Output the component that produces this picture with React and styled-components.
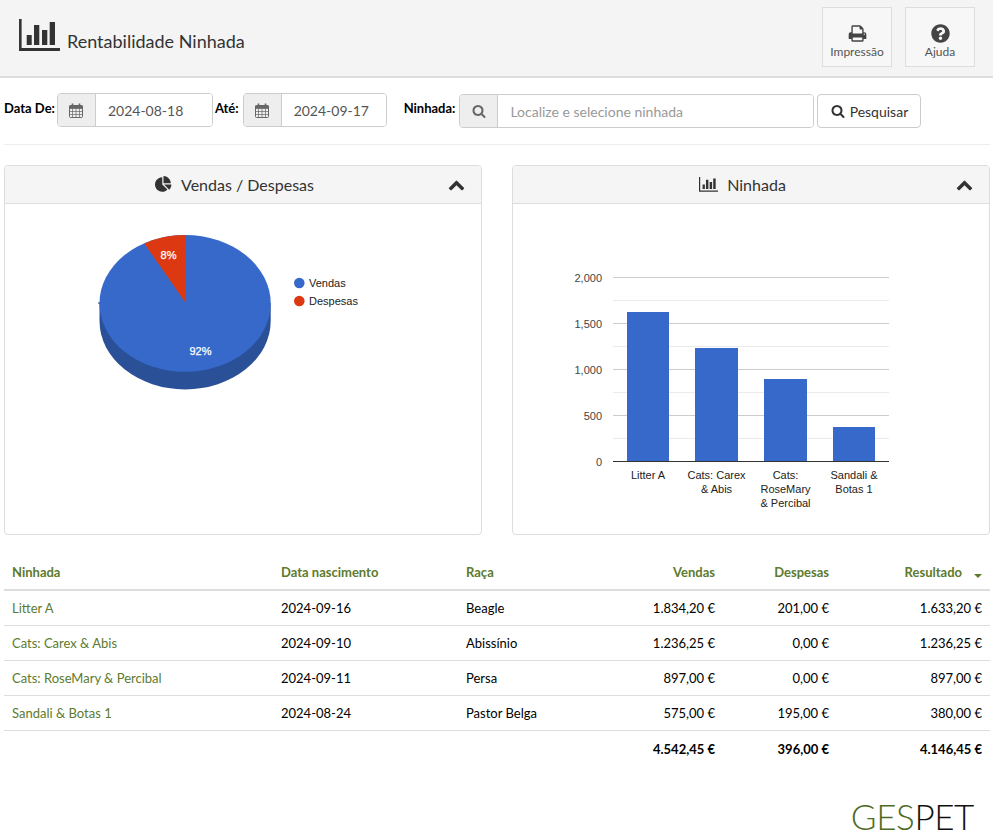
import React from 'react';
import styled, {createGlobalStyle} from 'styled-components';
import {FaQuestionCircle} from 'react-icons/fa';

const GlobalStyle = createGlobalStyle`
  html, body {
    margin: 0;
    padding: 0;
    background: #fff;
  }
  body {
    font-family: Lato, "Liberation Sans", sans-serif;
    font-size: 14px;
    color: #000;
  }
`;

const Page = styled.div`
  width: 993px;
  height: 840px;
  overflow: hidden;
`;

const Header = styled.header`
  height: 78px;
  box-sizing: border-box;
  background: #f4f4f4;
  border-bottom: 2px solid #ddd;
  display: flex;
  align-items: flex-start;
  justify-content: space-between;
  padding: 7px 18px 0 19px;
`;

const TitleWrap = styled.div`
  display: flex;
  align-items: flex-end;
  gap: 7px;
  padding-top: 12px;
  color: #333;
`;

const Title = styled.h1`
  margin: 0;
  font-size: 18px;
  font-weight: 400;
  line-height: 22px;
  color: #333;
  position: relative;
  top: 1px;
`;

const HeaderActions = styled.div`
  display: flex;
  gap: 13px;
`;

const HeaderBtn = styled.button`
  width: 70px;
  height: 60px;
  box-sizing: border-box;
  background: #f7f7f7;
  border: 1px solid #ddd;
  display: flex;
  flex-direction: column;
  align-items: center;
  padding: 16px 0 0;
  font-family: inherit;
  font-size: 12px;
  line-height: 14px;
  color: #555;
  svg {
    width: 19px;
    height: 19px;
    color: #444;
    margin-bottom: 2px;
  }
`;

const FilterRow = styled.form`
  display: flex;
  align-items: flex-start;
  margin: 15px 3px 0 4px;
  padding-bottom: 16px;
  height: 35px;
  border-bottom: 1px solid #eee;
`;

const Label = styled.label`
  font-weight: 700;
  font-size: 13px;
  line-height: 16px;
  margin-top: 1px;
  margin-left: ${({$left}) => $left || 0}px;
  margin-right: ${({$right}) => $right || 3}px;
  padding-top: 7px;
  position: relative;
  top: -1px;
  white-space: nowrap;
`;

const InputGroup = styled.div`
  display: flex;
  height: 34px;
  width: ${({$width}) => $width}px;
  box-sizing: border-box;
  margin-top: ${({$top}) => $top || 0}px;
  border: 1px solid #ccc;
  border-radius: 4px;
  overflow: hidden;
`;

const Addon = styled.span`
  width: 38px;
  flex: none;
  box-sizing: border-box;
  background: #eee;
  border-right: 1px solid #ccc;
  display: flex;
  align-items: center;
  justify-content: center;
  color: #666;
  font-size: 14px;
`;

const Field = styled.input`
  flex: 1;
  min-width: 0;
  border: 0;
  outline: 0;
  padding: 0 12px;
  font-family: inherit;
  font-size: 14px;
  color: #555;
  &::placeholder {
    color: #999;
    opacity: 1;
  }
`;

const SearchBtn = styled.button`
  margin: 1px 0 0 3px;
  width: 104px;
  height: 34px;
  box-sizing: border-box;
  background: #fff;
  border: 1px solid #ccc;
  border-radius: 4px;
  font-family: inherit;
  font-size: 14px;
  color: #333;
  display: flex;
  align-items: center;
  justify-content: center;
  gap: 5px;
`;

const Panels = styled.section`
  display: grid;
  grid-template-columns: 478px 478px;
  gap: 30px;
  margin: 20px 0 0 4px;
`;

const Panel = styled.article`
  height: 370px;
  box-sizing: border-box;
  border: 1px solid #ddd;
  border-radius: 4px;
  overflow: hidden;
`;

const PanelHead = styled.div`
  height: 38px;
  box-sizing: border-box;
  background: #f5f5f5;
  border-bottom: 1px solid #ddd;
  position: relative;
  display: flex;
  align-items: center;
  justify-content: center;
  gap: 9px;
  padding-right: 17px;
  font-size: 16px;
  color: #333;
`;

const Collapse = styled.span`
  position: absolute;
  right: 16px;
  top: 10px;
  color: #333;
  display: flex;
`;

const Chart = styled.svg`
  display: block;
  width: 476px;
  height: 330px;
  font-family: "Liberation Sans", Arial, sans-serif;
  font-size: 11px;
`;

const Table = styled.table`
  margin: 20px 0 0 4px;
  width: 986px;
  table-layout: fixed;
  border-collapse: collapse;
  font-size: 13px;
  th, td {
    padding: 0 8px;
    text-align: left;
    height: 34px;
    line-height: 16px;
  }
  thead th {
    height: 34px;
    font-weight: 700;
    color: #5d7a2d;
    border-bottom: 2px solid #ddd;
  }
  tbody td {
    height: 34px;
    border-bottom: 1px solid #ddd;
  }
  tfoot td {
    height: 35px;
    font-weight: 700;
  }
`;

const Num = styled.td`
  && { text-align: right; }
`;

const NumHead = styled.th`
  && { text-align: right; }
`;

const LitterLink = styled.a`
  color: #5d7a2d;
  text-decoration: none;
`;

const SortArrow = styled.span`
  display: inline-block;
  width: 0;
  height: 0;
  margin-left: 12px;
  border-left: 4px solid transparent;
  border-right: 4px solid transparent;
  border-top: 4px solid #5d7a2d;
  vertical-align: middle;
  position: relative;
  top: 2px;
`;

const Logo = styled.div`
  display: flex;
  justify-content: flex-end;
  margin: 29px 19px 0 0;
  font-size: 35px;
  line-height: 42px;
  font-weight: 300;
  letter-spacing: -0.4px;
  color: #111;
  span {
    color: #4f6b1f;
  }
`;

function BarsIcon({size}) {
  return (
    <svg width={size} height={size * 0.78} viewBox="0 0 41 32" fill="currentColor">
      <path d="M0 0h2.6v29H41v3H0z" />
      <path d="M7.7 16h5v10h-5zM15 6h5.3v20H15zM23 11h5.3v15H23zM30.7 3H36v23h-5.3z" />
    </svg>
  );
}

function FaIcon({size, d}) {
  return (
    <svg width={size} height={size} viewBox="0 0 1792 1792" fill="currentColor">
      <path d={d} />
    </svg>
  );
}

const searchPath = 'M1216 832q0-185-131.5-316.5t-316.5-131.5-316.5 131.5-131.5 316.5 131.5 316.5 316.5 131.5 316.5-131.5 131.5-316.5zm512 832q0 52-38 90t-90 38q-54 0-90-38l-343-342q-179 124-399 124-143 0-273.5-55.5t-225-150-150-225-55.5-273.5 55.5-273.5 150-225 225-150 273.5-55.5 273.5 55.5 225 150 150 225 55.5 273.5q0 220-124 399l343 343q37 37 37 90z';
const chevronPath = 'M1683 1331l-166 165q-19 19-45 19t-45-19L896 965l-531 531q-19 19-45 19t-45-19l-166-165q-19-19-19-45.5t19-45.5l742-741q19-19 45-19t45 19l742 741q19 19 19 45.5t-19 45.5z';
const printPath = 'M448 1536h896v-256h-896v256zm0-640h896v-384h-160q-40 0-68-28t-28-68v-160h-640v640zm1152 64q0-26-19-45t-45-19-45 19-19 45 19 45 45 19 45-19 19-45zm128 0v416q0 13-9.5 22.5t-22.5 9.5h-224v160q0 40-28 68t-68 28h-960q-40 0-68-28t-28-68v-160h-224q-13 0-22.5-9.5t-9.5-22.5v-416q0-79 56.5-135.5t135.5-56.5h64v-544q0-40 28-68t68-28h672q40 0 88 20t76 48l152 152q28 28 48 76t20 88v256h64q79 0 135.5 56.5t56.5 135.5z';
const piePath = 'M768 890l546 546q-106 108-247.5 168t-298.5 60q-209 0-385.5-103t-279.5-279.5-103-385.5 103-385.5 279.5-279.5 385.5-103v762zm187 6h773q0 157-60 298.5t-168 247.5zm709-128h-768v-768q209 0 385.5 103t279.5 279.5 103 385.5z';

function CalendarIcon() {
  return (
    <svg width="14" height="15" viewBox="0 0 14 15" fill="none" stroke="currentColor" strokeWidth="1">
      <rect x="0.5" y="2.5" width="13" height="12" rx="1" />
      <path d="M0.5 5.5h13M0.5 8.5h13M0.5 11.5h13M3.5 5.5v9M7 5.5v9M10.5 5.5v9" strokeWidth="0.7" />
      <path d="M3.5 0.5v3M10.5 0.5v3" strokeWidth="1.6" />
      <path d="M0.5 3h13v2h-13z" fill="currentColor" />
    </svg>
  );
}

function PieChart() {
  return (
    <Chart viewBox="5 204 476 330">
      <path d="M99.5 303v18a85.6 68.4 0 0 0 171.2 0v-18z" fill="#2a5098" />
      <ellipse cx="185.1" cy="303.4" rx="85.6" ry="68.4" fill="#3669c9" />
      <path d="M185.1 302L144.2 243.4A85.6 68.4 0 0 1 185.1 235z" fill="#dc3912" />
      <path d="M98 303h2" stroke="#1d3f86" strokeWidth="1" />
      <text x="168.5" y="259" fill="#fff" stroke="#fff" strokeWidth="0.25" textAnchor="middle">8%</text>
      <text x="200.5" y="355" fill="#fff" stroke="#fff" strokeWidth="0.25" textAnchor="middle">92%</text>
      <circle cx="299.3" cy="283" r="5.3" fill="#3669c9" />
      <text x="309" y="287" fill="#222">Vendas</text>
      <circle cx="299.3" cy="301" r="5.3" fill="#dc3912" />
      <text x="309" y="305" fill="#222">Despesas</text>
    </Chart>
  );
}

const ticks = [
  {y: 277.5, label: '2,000'},
  {y: 323.5, label: '1,500'},
  {y: 369.5, label: '1,000'},
  {y: 415.5, label: '500'},
  {y: 461.5, label: '0'},
];
const minor = [300.5, 346.5, 392.5, 438.5];
const bars = [
  {x: 627, w: 42, top: 312, label: ['Litter A']},
  {x: 695, w: 43, top: 348, label: ['Cats: Carex', '& Abis']},
  {x: 764, w: 43, top: 379, label: ['Cats:', 'RoseMary', '& Percibal']},
  {x: 833, w: 42, top: 427, label: ['Sandali &', 'Botas 1']},
];

function BarChart() {
  return (
    <Chart viewBox="513 204 476 330">
      {minor.map(y => <path key={y} d={`M613 ${y}H889`} stroke="#ebebeb" />)}
      {ticks.map(t => (
        <g key={t.label}>
          <path d={`M613 ${t.y}H889`} stroke={t.label === '0' ? '#333' : '#ccc'} />
          <text x="602" y={t.y + 4} textAnchor="end" fill="#444">{t.label}</text>
        </g>
      ))}
      {bars.map(b => (
        <g key={b.x}>
          <rect x={b.x} y={b.top} width={b.w} height={461 - b.top} fill="#3669c9" />
          {b.label.map((line, i) => (
            <text key={line} x={b.x + b.w / 2} y={479 + i * 14} textAnchor="middle" fill="#222">{line}</text>
          ))}
        </g>
      ))}
    </Chart>
  );
}

const rows = [
  ['Litter A', '2024-09-16', 'Beagle', '1.834,20 €', '201,00 €', '1.633,20 €'],
  ['Cats: Carex & Abis', '2024-09-10', 'Abissínio', '1.236,25 €', '0,00 €', '1.236,25 €'],
  ['Cats: RoseMary & Percibal', '2024-09-11', 'Persa', '897,00 €', '0,00 €', '897,00 €'],
  ['Sandali & Botas 1', '2024-08-24', 'Pastor Belga', '575,00 €', '195,00 €', '380,00 €'],
];

export default function App() {
  return (
    <Page>
      <GlobalStyle />
      <Header>
        <TitleWrap>
          <BarsIcon size={41} />
          <Title>Rentabilidade Ninhada</Title>
        </TitleWrap>
        <HeaderActions>
          <HeaderBtn type="button"><FaIcon size={19} d={printPath} />Impressão</HeaderBtn>
          <HeaderBtn type="button"><FaQuestionCircle />Ajuda</HeaderBtn>
        </HeaderActions>
      </Header>

      <FilterRow>
        <Label $right={2}>Data De:</Label>
        <InputGroup $width={156}>
          <Addon><CalendarIcon /></Addon>
          <Field defaultValue="2024-08-18" />
        </InputGroup>
        <Label $left={2} $right={4}>Até:</Label>
        <InputGroup $width={144}>
          <Addon><CalendarIcon /></Addon>
          <Field defaultValue="2024-09-17" />
        </InputGroup>
        <Label $left={17} $right={4}>Ninhada:</Label>
        <InputGroup $width={355} $top={1}>
          <Addon><FaIcon size={14} d={searchPath} /></Addon>
          <Field placeholder="Localize e selecione ninhada" />
        </InputGroup>
        <SearchBtn type="button"><FaIcon size={14} d={searchPath} />Pesquisar</SearchBtn>
      </FilterRow>

      <Panels>
        <Panel>
          <PanelHead>
            <FaIcon size={17} d={piePath} />
            Vendas / Despesas
            <Collapse><FaIcon size={17} d={chevronPath} /></Collapse>
          </PanelHead>
          <PieChart />
        </Panel>
        <Panel>
          <PanelHead>
            <BarsIcon size={19} />
            Ninhada
            <Collapse><FaIcon size={17} d={chevronPath} /></Collapse>
          </PanelHead>
          <BarChart />
        </Panel>
      </Panels>

      <Table>
        <colgroup>
          <col style={{width: 269}} />
          <col style={{width: 185}} />
          <col style={{width: 142}} />
          <col style={{width: 123}} />
          <col style={{width: 114}} />
          <col style={{width: 153}} />
        </colgroup>
        <thead>
          <tr>
            <th>Ninhada</th>
            <th>Data nascimento</th>
            <th>Raça</th>
            <NumHead>Vendas</NumHead>
            <NumHead>Despesas</NumHead>
            <NumHead>Resultado<SortArrow /></NumHead>
          </tr>
        </thead>
        <tbody>
          {rows.map(r => (
            <tr key={r[0]}>
              <td><LitterLink href="#">{r[0]}</LitterLink></td>
              <td>{r[1]}</td>
              <td>{r[2]}</td>
              <Num>{r[3]}</Num>
              <Num>{r[4]}</Num>
              <Num>{r[5]}</Num>
            </tr>
          ))}
        </tbody>
        <tfoot>
          <tr>
            <td colSpan={3} />
            <Num>4.542,45 €</Num>
            <Num>396,00 €</Num>
            <Num>4.146,45 €</Num>
          </tr>
        </tfoot>
      </Table>

      <Logo><span>GES</span>PET</Logo>
    </Page>
  );
}
